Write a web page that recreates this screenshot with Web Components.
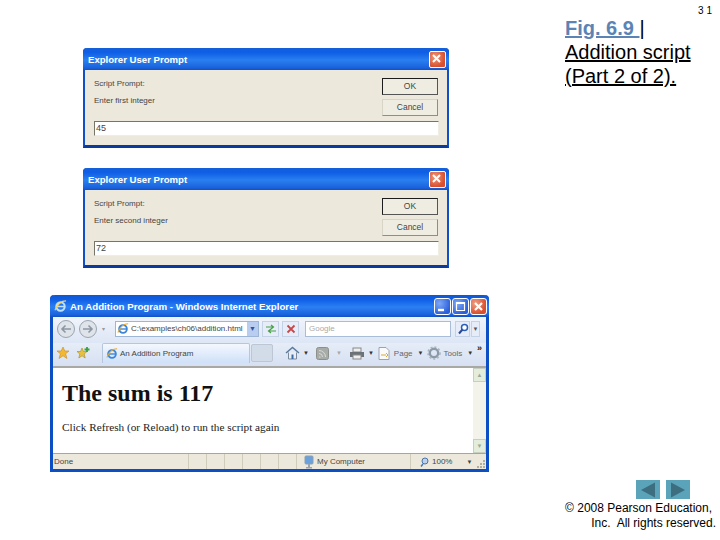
<!DOCTYPE html>
<html>
<head>
<meta charset="utf-8">
<title>Addition script</title>
<style>
  html, body { margin: 0; padding: 0; background: #fff; }
  body { width: 720px; height: 540px; overflow: hidden; font-family: "Liberation Sans", Arial, sans-serif; }
</style>
</head>
<body>
<slide-page>
  <prompt-dialog slot="left" label="Enter first integer" value="45"></prompt-dialog>
  <prompt-dialog slot="left" label="Enter second integer" value="72"></prompt-dialog>
  <ie-window slot="left">
    <h1>The sum is 117</h1>
    <p>Click Refresh (or Reload) to run the script again</p>
  </ie-window>
  <slide-caption slot="right" page="3 1"></slide-caption>
</slide-page>

<script>
class SlidePage extends HTMLElement {
  constructor() {
    super();
    this.attachShadow({mode: 'open'});
    this.shadowRoot.innerHTML = `
      <style>
        :host { display: flex; width: 720px; height: 540px; }
        .left { width: 540px; flex: none; }
        .right { flex: 1; min-width: 0; }
      </style>
      <div class="left"><slot name="left"></slot></div>
      <div class="right"><slot name="right"></slot></div>
    `;
  }
}

class PromptDialog extends HTMLElement {
  constructor() {
    super();
    this.attachShadow({mode: 'open'});
    this.shadowRoot.innerHTML = `
      <style>
        :host { display: block; width: 366px; height: 100px; margin: 48px 0 0 83px; box-sizing: border-box;
          background: #ece9dc; border: 2px solid #0f50c8; border-top: 0; border-bottom: 3px solid #0a3a9c; border-radius: 4px 4px 0 0;
          font: 8px "Liberation Sans", Arial, sans-serif; color: #444; }
        :host(:not(:first-child)) { margin-top: 20px; }
        .title { height: 22px; box-sizing: border-box; padding: 1px 3px 0 5px; margin: 0 -2px; display: flex; align-items: center; justify-content: space-between;
          background: linear-gradient(#1460d8, #0f5ee6 20%, #2a7ff0 55%, #1a62dc 90%, #1150c4); border-radius: 4px 4px 0 0;
          color: #fff; font-weight: bold; font-size: 9.6px; }
        .close { width: 15px; height: 15px; border: 1px solid #fff; border-radius: 2px; background: radial-gradient(circle at 35% 35%, #ee9a80, #d8502e 70%); display: flex; margin-top: -1px; }
        .body { display: grid; grid-template-columns: 1fr 56px; column-gap: 4px; padding: 8px 9px 0 9px; }
        .texts { display: flex; flex-direction: column; gap: 5.5px; line-height: 11px; }
        .buttons { display: flex; flex-direction: column; gap: 4.5px; font-size: 8.5px; }
        .btn { height: 16.5px; box-sizing: border-box; background: #efede2; display: flex; align-items: center; justify-content: center;
          border: 1px solid #d8d5c6; border-right-color: #908e82; border-bottom-color: #908e82; }
        .btn.def { border: 1px solid #1c1c1c; border-right-color: #555; border-bottom-color: #555; }
        .input { height: 15px; box-sizing: border-box; margin: 5.5px -1px 0 0; background: #fff; border: 1px solid #f0eee4; border-top-color: #77756a; border-left-color: #77756a; padding: 0 1px; line-height: 13px; grid-column: 1 / 3; font-size: 9px; }
      </style>
      <div class="title"><span>Explorer User Prompt</span>
        <span class="close"><svg viewBox="0 0 13 13" width="13" height="13"><path d="M3 3l7 7M10 3l-7 7" stroke="#fff" stroke-width="2" fill="none"/></svg></span></div>
      <div class="body">
        <div class="texts"><span>Script Prompt:</span><span class="label"></span></div>
        <div class="buttons"><div class="btn def">OK</div><div class="btn">Cancel</div></div>
        <div class="input"></div>
      </div>
    `;
    this.shadowRoot.querySelector('.label').textContent = this.getAttribute('label');
    this.shadowRoot.querySelector('.input').textContent = this.getAttribute('value');
  }
}

class IeWindow extends HTMLElement {
  constructor() {
    super();
    this.attachShadow({mode: 'open'});
    this.shadowRoot.innerHTML = `
      <style>
        :host { display: flex; flex-direction: column; width: 439px; height: 177px; margin: 27px 0 0 50px; box-sizing: border-box;
          border: 3px solid #0c4fc4; border-top: 0; border-radius: 4px 4px 0 0;
          font: 8px "Liberation Sans", Arial, sans-serif; color: #444; background: #fff; }
        .title { flex: none; height: 22px; margin: 0 -3px; padding: 0 2px 0 4px; display: flex; align-items: center; gap: 3px; border-radius: 5px 5px 0 0;
          background: linear-gradient(#0f57d0, #0f5ee6 20%, #2b80f2 55%, #1a62dc 90%, #1150c4); color: #fff; font-weight: bold; font-size: 9.7px; }
        .title .txt { flex: 1; }
        .win { display: flex; gap: 1px; }
        .win span { width: 17px; height: 17px; box-sizing: border-box; border: 1px solid #fff; border-radius: 3px; display: flex; background: radial-gradient(circle at 30% 30%, #7ea8f4, #2a5fdc 75%); }
        .win span.x { background: radial-gradient(circle at 30% 30%, #f0a088, #d8502e 70%); }
        .nav { flex: none; height: 26px; display: flex; align-items: center; padding: 0 2px 3px 2px; box-sizing: border-box; background: linear-gradient(#f0f4fc, #dde6f5); }
        .round { width: 22px; height: 20px; display: flex; align-items: center; justify-content: center; }
        .addr { width: 144px; height: 16px; box-sizing: border-box; background: #fff; border: 1px solid #9db6d8; display: flex; align-items: center; gap: 2px; padding-left: 1px; margin-left: 10px; white-space: nowrap; font-size: 8px; flex: none; }
        .addr .v { flex: 1; }
        .addr .drop { width: 11px; height: 14px; flex: none; background: #b9cdf0; color: #33549c; display: flex; align-items: center; justify-content: center; font-size: 7px; }
        .small { width: 17px; height: 16px; box-sizing: border-box; background: #e6edf8; border: 1px solid #c4d2e8; margin-left: 3px; display: flex; align-items: center; justify-content: center; flex: none; }
        .search { width: 146px; height: 16px; box-sizing: border-box; background: #fff; border: 1px solid #aabdd8; margin-left: 6px; color: #aaa; padding: 1px 3px; line-height: 12px; flex: none; }
        .gobtn { width: 15px; margin-left: 4px; }
        .drop2 { width: 9px; height: 16px; box-sizing: border-box; border: 1px solid #c4d2e8; background: #e6edf8; margin-left: 1px; color: #555; font-size: 6px; display: flex; align-items: center; justify-content: center; }
        .tabs { flex: none; height: 25px; box-sizing: border-box; display: flex; align-items: flex-end; padding: 0 0 3px 3px; background: linear-gradient(#e6edf8, #d6e0f2); border-bottom: 2px solid #a8a8a4; position: relative; }
        .fav { display: flex; gap: 6px; align-self: center; width: 46px; flex: none; }
        .tab { width: 148px; height: 20px; flex: none; box-sizing: border-box; background: linear-gradient(#f4f8fe, #cfe0f8); border: 1px solid #b6c6dc; border-bottom: 0; border-radius: 2px 2px 0 0; display: flex; align-items: center; gap: 2px; padding-left: 3px; }
        .newtab { width: 22px; height: 18px; margin-left: 1px; flex: none; box-sizing: border-box; background: #d2dbe8; border: 1px solid #bcc6d4; border-radius: 2px; }
        .tools { display: flex; align-items: center; gap: 3px; margin-left: 12px; align-self: center; font-size: 8px; color: #666; white-space: nowrap; }
        .tools i { font-style: normal; font-size: 6px; color: #333; margin-right: 4px; }
        .more { position: absolute; right: 4px; top: 0; font-weight: bold; font-size: 9px; color: #222; }
        .content { flex: 1; min-height: 0; display: flex; }
        .page { flex: 1; padding: 11px 0 0 9px; color: #111; }
        ::slotted(h1) { margin: 0; font: bold 24px/28px "Liberation Serif", "Times New Roman", serif; color: #111; }
        ::slotted(p) { margin: 13px 0 0; font: 11.25px/14px "Liberation Serif", "Times New Roman", serif; color: #222; }
        .scroll { width: 13px; flex: none; margin-right: 0; background: #f3f3ec; display: flex; flex-direction: column; justify-content: space-between; }
        .scroll span { height: 14px; box-sizing: border-box; background: #e4ecdc; border: 1px solid #c6cfc0; color: #9aaa98; font-size: 6px; display: flex; align-items: center; justify-content: center; }
        .status { flex: none; height: 16px; background: #ece9dc; border-top: 1px solid #a8a69a; display: flex; align-items: center; box-sizing: border-box; position: relative; }
        .status .cell { height: 100%; box-sizing: border-box; border-right: 1px solid #cfccbc; }
        .st1 { width: 136px; padding-left: 1px; line-height: 15px; }
        .st { width: 18px; }
        .zone { width: 114px; display: flex; align-items: center; gap: 2px; padding-left: 6px; }
        .zoom { display: flex; align-items: center; gap: 2px; padding-left: 9px; }
        .zoom i { font-style: normal; font-size: 6px; margin-left: 12px; }
        .grip { position: absolute; right: 1px; bottom: 1px; }
      </style>
      <div class="title">
        <svg width="13" height="13" viewBox="0 0 14 14"><circle cx="7" cy="7" r="4.5" fill="none" stroke="#bde2ff" stroke-width="2.2"/><path d="M3 7h8" stroke="#bde2ff" stroke-width="1.6"/><path d="M1 11C4 4 9 1 13 1" stroke="#ffd257" stroke-width="1.2" fill="none"/></svg>
        <span class="txt">An Addition Program - Windows Internet Explorer</span>
        <span class="win">
          <span><svg viewBox="0 0 15 15" width="15" height="15"><path d="M3 11h6" stroke="#fff" stroke-width="2.4"/></svg></span>
          <span><svg viewBox="0 0 15 15" width="15" height="15"><path d="M3.5 3.5h8v8h-8z" stroke="#fff" stroke-width="1.2" fill="none"/><path d="M3.5 4h8" stroke="#fff" stroke-width="2"/></svg></span>
          <span class="x"><svg viewBox="0 0 15 15" width="15" height="15"><path d="M4 4l7 7M11 4l-7 7" stroke="#fff" stroke-width="2.2"/></svg></span>
        </span>
      </div>
      <div class="nav">
        <span class="round"><svg width="20" height="20" viewBox="0 0 20 20"><circle cx="10" cy="10" r="8.5" fill="#dfe4ea" stroke="#9aa4ae"/><path d="M15 10H6M9.5 6.5L6 10l3.5 3.5" stroke="#8d97a2" stroke-width="1.6" fill="none"/></svg></span>
        <span class="round"><svg width="20" height="20" viewBox="0 0 20 20"><circle cx="10" cy="10" r="8.5" fill="#dfe4ea" stroke="#9aa4ae"/><path d="M5 10h9M10.5 6.5L14 10l-3.5 3.5" stroke="#8d97a2" stroke-width="1.6" fill="none"/></svg></span>
        <span style="font-size:6px;color:#999;margin-left:3px">&#9662;</span>
        <div class="addr">
          <svg width="12" height="12" viewBox="0 0 14 14" style="flex:none"><circle cx="7" cy="7" r="4.5" fill="none" stroke="#3b86d8" stroke-width="2.2"/><path d="M3 7h8" stroke="#3b86d8" stroke-width="1.6"/><path d="M1 11C4 4 9 1 13 1" stroke="#e6a92c" stroke-width="1.2" fill="none"/></svg>
          <span class="v">C:\\examples\\ch06\\addition.html</span><span class="drop">&#9660;</span>
        </div>
        <span class="small"><svg width="12" height="12" viewBox="0 0 12 12"><path d="M1 4h7M6 2l2.5 2L6 6M11 8H4M6 6L3.5 8 6 10" stroke="#46a046" stroke-width="1.2" fill="none"/></svg></span>
        <span class="small"><svg width="10" height="10" viewBox="0 0 10 10"><path d="M1.5 1.5l7 7M8.5 1.5l-7 7" stroke="#c8484a" stroke-width="1.8"/></svg></span>
        <div class="search">Google</div>
        <span class="small gobtn"><svg width="12" height="12" viewBox="0 0 12 12"><circle cx="7.5" cy="4.5" r="3" fill="#fff" stroke="#2a5fb8" stroke-width="1.5"/><path d="M5.5 6.5L2 10.5" stroke="#2a4a98" stroke-width="2"/></svg></span>
        <span class="drop2">&#9660;</span>
      </div>
      <div class="tabs">
        <div class="fav">
          <svg width="14" height="14" viewBox="0 0 14 14"><path d="M7 1l1.8 4H13l-3.4 2.8L11 12.5 7 9.8 3 12.5l1.4-4.700L1 5h4.200z" fill="#f4b830" stroke="#c88a20" stroke-width=".6"/></svg>
          <svg width="14" height="14" viewBox="0 0 14 14"><path d="M6 2l1.5 3.5H11L8.2 8l1 4L6 9.8 2.8 12l1-4L1 5.5h3.5z" fill="#e8c040" stroke="#a88a20" stroke-width=".6"/><path d="M11 1v5M8.5 3.5h5" stroke="#3aa03a" stroke-width="1.8"/></svg>
        </div>
        <div class="tab">
          <svg width="12" height="12" viewBox="0 0 14 14" style="flex:none"><circle cx="7" cy="7" r="4.5" fill="none" stroke="#3b86d8" stroke-width="2.2"/><path d="M3 7h8" stroke="#3b86d8" stroke-width="1.6"/><path d="M1 11C4 4 9 1 13 1" stroke="#e6a92c" stroke-width="1.2" fill="none"/></svg>
          <span>An Addition Program</span>
        </div>
        <span class="newtab" style="align-self:center"></span>
        <div class="tools">
          <svg width="15" height="14" viewBox="0 0 15 14"><path d="M1 7l6.5-5.500L14 7" stroke="#5a7a9c" stroke-width="1.5" fill="none"/><path d="M3.5 6.5V13h8V6.5" fill="#e8eef4" stroke="#7a8a9c"/><path d="M6.500 8.500h2V13h-2z" fill="#3a6aa8"/></svg><i>&#9660;</i>
          <svg width="13" height="13" viewBox="0 0 13 13"><rect x=".5" y=".5" width="12" height="12" rx="2" fill="#a8aca8" stroke="#8c908c"/><path d="M3 10h1.5M3 6.5a3.5 3.5 0 0 1 3.5 3.5M3 3.5A6.5 6.5 0 0 1 9.5 10" stroke="#d8dcd8" fill="none"/></svg><i style="color:#aaa;margin-left:4px;margin-right:4px">&#9660;</i>
          <svg width="16" height="13" viewBox="0 0 16 13"><rect x="4" y="1" width="8" height="4" fill="#eee" stroke="#888"/><rect x="1" y="5" width="14" height="5" fill="#6a7278"/><rect x="4" y="8" width="8" height="4" fill="#eee" stroke="#888"/></svg><i style="margin-right:0">&#9660;</i>
          <svg width="14" height="15" viewBox="0 0 14 15"><path d="M2 1.5h7l3 3v9H2z" fill="#fafafa" stroke="#9aa4ae"/><path d="M4 9h5M9 7l2 2-2 2" stroke="#d8a838" fill="none"/></svg><span>Page</span><i style="margin-left:2px;margin-right:0">&#9660;</i>
          <svg width="14" height="14" viewBox="0 0 14 14"><circle cx="7" cy="7" r="4.2" fill="none" stroke="#8c9aa8" stroke-width="2.4"/><circle cx="7" cy="7" r="6" fill="none" stroke="#aab4be" stroke-width="1.6" stroke-dasharray="2 2"/></svg><span>Tools</span><i style="margin-left:2px">&#9660;</i>
        </div>
        <span class="more">&raquo;</span>
      </div>
      <div class="content">
        <div class="page"><slot></slot></div>
        <div class="scroll"><span>&#9650;</span><span>&#9660;</span></div>
      </div>
      <div class="status">
        <div class="cell st1">Done</div>
        <div class="cell st"></div><div class="cell st"></div><div class="cell st"></div><div class="cell st"></div><div class="cell st"></div><div class="cell st"></div>
        <div class="cell zone">
          <svg width="12" height="14" viewBox="0 0 12 14"><rect x="2" y="1" width="8" height="8" rx="1" fill="#6aa0dc" stroke="#8aa0b4"/><path d="M3 12h6v1.5H3z" fill="#9aa4ae"/><path d="M6 9v3" stroke="#9aa4ae" stroke-width="2"/></svg>
          <span>My Computer</span>
        </div>
        <div class="zoom">
          <svg width="10" height="10" viewBox="0 0 10 10"><circle cx="5" cy="4" r="3" fill="#bcd2ec" stroke="#4a74a8"/><path d="M3 7L1 9.5" stroke="#4a74a8" stroke-width="1.5"/></svg>
          <span>100%</span><i>&#9660;</i>
        </div>
        <svg class="grip" width="9" height="9" viewBox="0 0 9 9" fill="#b0ae9f"><rect x="7" y="1" width="2" height="2"/><rect x="4" y="4" width="2" height="2"/><rect x="7" y="4" width="2" height="2"/><rect x="1" y="7" width="2" height="2"/><rect x="4" y="7" width="2" height="2"/><rect x="7" y="7" width="2" height="2"/></svg>
      </div>
    `;
  }
}

class SlideCaption extends HTMLElement {
  constructor() {
    super();
    this.attachShadow({mode: 'open'});
    this.shadowRoot.innerHTML = `
      <style>
        :host { display: flex; flex-direction: column; height: 540px; box-sizing: border-box; padding: 5px 4px 9px 25px; color: #000; font-family: "Liberation Sans", Arial, sans-serif; }
        .num { font-size: 10px; line-height: 11px; text-align: right; padding-right: 4px; }
        h2 { margin: 0; font-weight: normal; font-size: 20px; line-height: 24px; }
        h2 span { text-decoration: underline; }
        h2 b { color: #5b84b5; text-decoration: underline; }
        .spacer { flex: 1; }
        .buttons { display: flex; gap: 6px; margin-left: 71px; }
        .buttons span { width: 24px; height: 19px; background: #5ba3b8; display: flex; align-items: center; justify-content: center; }
        .copy { font-size: 12px; line-height: 15px; text-align: right; margin-top: 2px; }
        .copy div:first-child { padding-right: 4px; }
      </style>
      <div class="num"></div>
      <h2><b>Fig. 6.9 </b><span>|</span><br><span>Addition script</span><br><span>(Part 2 of 2).</span></h2>
      <div class="spacer"></div>
      <div class="buttons">
        <span><svg width="16" height="16" viewBox="0 0 16 16"><path d="M1 8l14-7.5v15z" fill="#3c6e80"/></svg></span>
        <span><svg width="16" height="16" viewBox="0 0 16 16"><path d="M15 8L1 .5v15z" fill="#3c6e80"/></svg></span>
      </div>
      <div class="copy"><div>&copy; 2008 Pearson Education,</div><div>Inc.&nbsp; All rights reserved.</div></div>
    `;
    this.shadowRoot.querySelector('.num').textContent = this.getAttribute('page');
  }
}

customElements.define('slide-page', SlidePage);
customElements.define('prompt-dialog', PromptDialog);
customElements.define('ie-window', IeWindow);
customElements.define('slide-caption', SlideCaption);
</script>
</body>
</html>
